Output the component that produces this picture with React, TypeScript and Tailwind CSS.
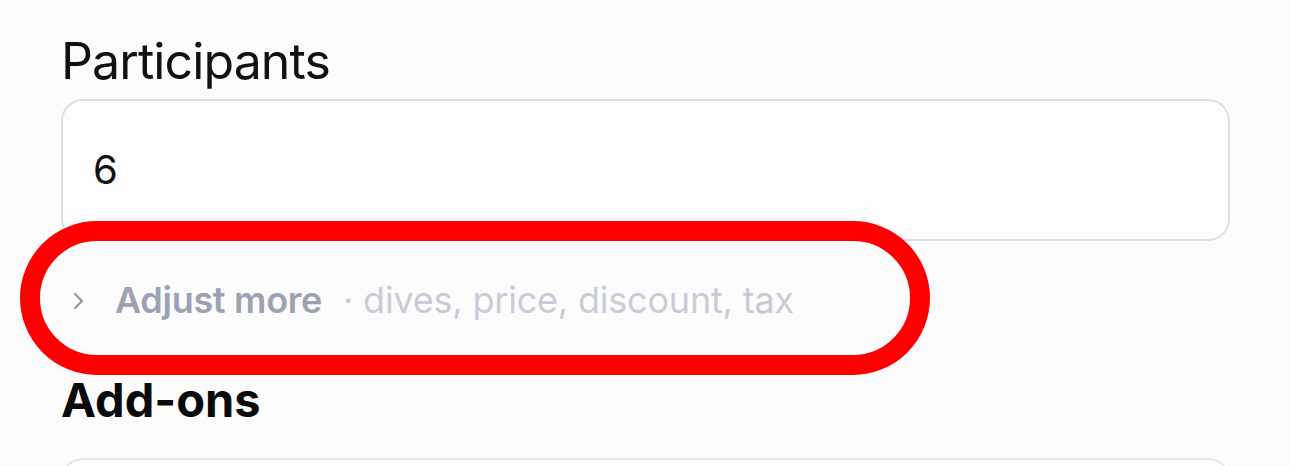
import React from "react";

export default function App() {
  return (
    <div
      className="w-[1290px] h-[466px] overflow-hidden bg-[#fdfcfd] pl-[61px] pr-[60px] pt-[36px]"
      style={{ fontFamily: "Inter, 'Noto Sans', sans-serif" }}
    >
      <div className="text-[50px] leading-none text-[#111] tracking-[-0.9px]">Participants</div>
      <div className="mt-[13px] h-[142px] rounded-[22px] border-2 border-[#dddde2] bg-[#fdfcfe] flex items-center pl-[30px]">
        <span className="text-[40px] leading-none text-[#111]">6</span>
      </div>
      <div className="relative mt-[41px] flex items-center h-[36px]">
        <div className="absolute left-[-41px] top-[-61px] w-[910px] h-[154px] rounded-full border-[20px] border-[#ff0000]" />
        <svg className="ml-[11px] mt-[1px]" width="14" height="20" viewBox="0 0 14 20" fill="none">
          <polyline points="3,3 10,10 3,17" stroke="#8e93a1" strokeWidth="2" strokeLinecap="round" strokeLinejoin="round" />
        </svg>
        <span className="ml-[29px] text-[36px] leading-none font-semibold text-[#9ca1b3] tracking-[-0.3px]">Adjust more</span>
        <span className="ml-[21px] text-[36px] leading-none text-[#c9ccd7] tracking-[-0.2px]">· dives, price, discount, tax</span>
      </div>
      <div className="mt-[58px] text-[47px] leading-none font-bold text-[#0a0a0a]">Add-ons</div>
      <div className="mt-[35px] h-[142px] rounded-[22px] border-2 border-[#e6e6ea] bg-[#fdfcfe]" />
    </div>
  );
}
